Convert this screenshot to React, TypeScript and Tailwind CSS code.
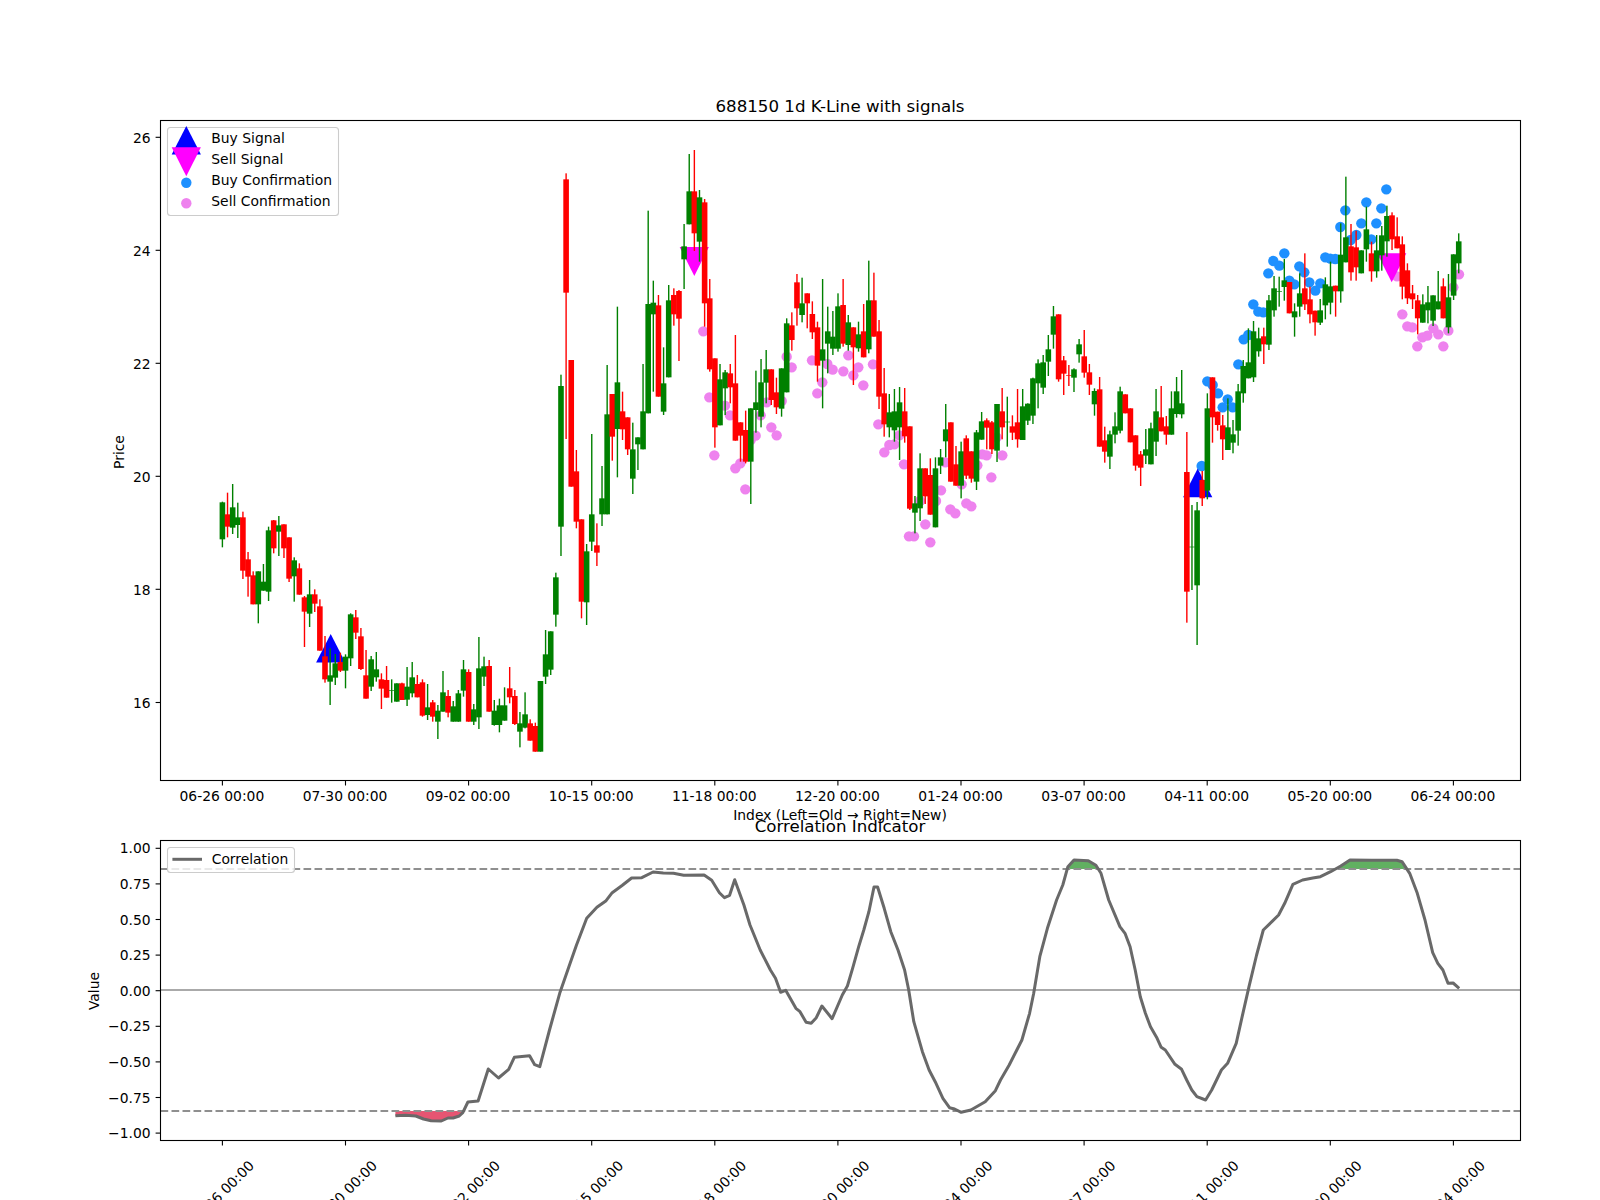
import React from 'react';

type Row = [string, number, number, number, number];
type Pt = [number, number];

// candle rows as read from the plot: colour, wick top, body top, body bottom, wick bottom
// each block has its own vertical offset, values are in 1/3 px
const blocks: { y0: number; rows: Row[] }[] = [
  {
    y0: 460,
    rows: [
      ['g', 125, 127, 238, 262], ['r', 98, 163, 200, 232], ['g', 72, 142, 203, 222], ['g', 128, 172, 195, 234],
      ['r', 155, 172, 332, 357], ['r', 276, 298, 350, 410], ['r', 334, 346, 433, 433], ['g', 334, 334, 433, 490],
      ['g', 312, 365, 392, 392], ['g', 200, 211, 395, 423], ['r', 180, 181, 265, 280], ['g', 168, 196, 215, 288],
      ['r', 193, 193, 265, 294], ['r', 232, 232, 356, 366], ['g', 292, 301, 349, 425], ['r', 310, 325, 404, 404],
      ['r', 408, 412, 455, 561], ['g', 360, 403, 461, 501], ['r', 388, 403, 431, 456], ['r', 418, 439, 572, 572],
      ['r', 528, 589, 658, 668], ['g', 565, 646, 665, 735], ['g', 582, 610, 653, 675], ['r', 578, 606, 632, 636],
      ['g', 583, 590, 632, 685], ['g', 460, 463, 595, 618], ['r', 450, 472, 518, 537], ['r', 504, 529, 627, 630],
      ['r', 570, 646, 716, 716], ['g', 588, 598, 680, 693], ['g', 576, 628, 652, 665], ['r', 640, 658, 686, 747],
      ['r', 618, 660, 713, 713], ['g', 658, 690, 692, 728], ['g', 670, 670, 725, 725], ['r', 668, 670, 720, 720],
      ['g', 621, 680, 719, 738], ['g', 606, 652, 700, 712], ['r', 645, 672, 712, 712], ['r', 658, 667, 767, 770],
      ['g', 672, 742, 765, 780], ['r', 720, 727, 770, 785], ['g', 735, 752, 785, 837], ['g', 633, 697, 755, 755],
      ['r', 690, 708, 758, 772], ['g', 723, 739, 785, 785], ['g', 690, 700, 785, 785], ['g', 600, 628, 692, 710],
      ['r', 628, 636, 785, 785], ['g', 732, 748, 785, 795], ['g', 531, 625, 772, 807], ['g', 590, 619, 650, 678],
      ['r', 600, 618, 755, 755], ['g', 720, 752, 795, 797], ['g', 716, 736, 795, 817], ['g', 682, 736, 782, 782],
      ['r', 621, 685, 712, 730], ['r', 690, 708, 792, 795], ['g', 756, 790, 815, 862], ['g', 697, 763, 803, 805],
      ['r', 778, 790, 842, 842], ['r', 788, 798, 875, 875], ['g', 663, 663, 875, 875], ['g', 510, 583, 650, 672],
      ['g', 514, 514, 629, 645],
    ],
  },
  { y0: 370, rows: [['g', 608, 622, 734, 770], ['g', 14, 48, 470, 558]] },
  { y0: 140, rows: [['r', 100, 118, 458, 897]] },
  {
    y0: 370,
    rows: [
      ['r', -30, -30, 350, 350], ['r', 240, 304, 455, 475], ['r', 448, 448, 695, 745], ['g', 522, 544, 697, 765],
      ['g', 192, 433, 515, 543], ['r', 460, 526, 548, 588], ['g', 288, 385, 433, 468], ['g', -15, 133, 433, 433],
      ['r', 72, 72, 200, 272], ['g', -190, 37, 177, 322], ['r', 65, 124, 178, 210], ['r', 142, 142, 238, 255],
      ['g', 158, 238, 326, 372], ['g', 202, 202, 223, 300], ['g', -18, 124, 238, 238],
    ],
  },
  {
    y0: 140,
    rows: [
      ['g', 212, 492, 820, 820], ['g', 422, 488, 523, 755], ['r', 465, 496, 770, 770], ['g', 622, 730, 815, 825],
      ['g', 435, 481, 712, 712], ['r', 445, 465, 523, 557], ['r', 450, 453, 536, 663], ['g', 252, 319, 358, 447],
      ['g', 42, 154, 253, 253], ['r', 30, 154, 280, 333], ['g', 150, 172, 305, 365], ['r', 177, 187, 490, 560],
      ['r', 417, 475, 688, 695], ['r', 655, 655, 862, 923], ['g', 672, 718, 856, 856], ['g', 690, 697, 745, 825],
      ['r', 672, 700, 742, 790], ['r', 585, 730, 902, 902], ['r', 847, 847, 887, 965], ['r', 812, 870, 965, 970],
      ['g', 805, 805, 965, 1092], ['g', 692, 787, 810, 878], ['g', 657, 727, 830, 862], ['g', 630, 688, 728, 790],
      ['r', 688, 688, 780, 795], ['r', 713, 757, 802, 822], ['g', 685, 685, 806, 830], ['g', 535, 550, 757, 757],
      ['r', 517, 556, 600, 632], ['r', 402, 427, 505, 557], ['g', 413, 490, 525, 547], ['r', 460, 460, 490, 565],
      ['r', 484, 522, 577, 597], ['r', 545, 562, 677, 725], ['g', 417, 628, 662, 805], ['g', 500, 574, 611, 700],
      ['g', 513, 590, 626, 645], ['g', 460, 499, 626, 635], ['r', 417, 495, 611, 620], ['g', 525, 547, 615, 632],
      ['r', 562, 562, 622, 735], ['g', 545, 583, 625, 635],
    ],
  },
  {
    y0: 240,
    rows: [
      ['r', 192, 274, 352, 352], ['g', 62, 181, 328, 340], ['r', 98, 181, 290, 290], ['r', 240, 274, 470, 507],
      ['r', 384, 460, 553, 590], ['g', 462, 517, 562, 592], ['g', 447, 514, 571, 605], ['g', 441, 487, 562, 660],
      ['r', 444, 514, 589, 608], ['r', 559, 559, 806, 810], ['g', 768, 790, 818, 880], ['g', 640, 685, 805, 843],
      ['r', 685, 685, 769, 792], ['r', 655, 705, 824, 824], ['g', 652, 685, 862, 862], ['g', 627, 652, 677, 702],
      ['g', 492, 568, 604, 652], ['r', 547, 547, 725, 725], ['r', 618, 673, 737, 737], ['g', 605, 634, 737, 775],
      ['r', 586, 595, 707, 717], ['r', 634, 634, 716, 728], ['g', 570, 577, 725, 750], ['g', 516, 544, 599, 599],
      ['r', 535, 541, 563, 628], ['r', 543, 547, 628, 642], ['g', 492, 492, 632, 666], ['r', 444, 514, 562, 598],
      ['g', 470, 545, 547, 620], ['r', 526, 559, 578, 600], ['r', 447, 547, 598, 623], ['g', 447, 499, 600, 600],
      ['g', 490, 491, 542, 555], ['g', 413, 415, 527, 552], ['g', 358, 370, 430, 505], ['g', 345, 367, 443, 462],
      ['g', 285, 328, 365, 408], ['g', 198, 229, 284, 326], ['r', 223, 223, 418, 425], ['r', 348, 361, 401, 465],
      ['r', 375, 405, 407, 438], ['g', 385, 388, 413, 456], ['g', 297, 313, 343, 368], ['r', 270, 349, 398, 413],
      ['r', 372, 397, 434, 465], ['g', 445, 453, 493, 527], ['r', 411, 448, 620, 620], ['r', 560, 601, 635, 668],
      ['g', 572, 583, 650, 687], ['g', 517, 559, 584, 610], ['g', 440, 454, 572, 580], ['r', 463, 463, 520, 520],
      ['r', 505, 505, 607, 607], ['r', 586, 586, 677, 692], ['r', 633, 643, 683, 738], ['g', 567, 628, 647, 672],
      ['g', 548, 565, 673, 673], ['g', 447, 514, 605, 648], ['r', 438, 532, 574, 574], ['r', 528, 559, 584, 614],
      ['g', 454, 505, 584, 584], ['g', 411, 454, 522, 533], ['g', 390, 490, 523, 535],
    ],
  },
  {
    y0: 400,
    rows: [
      ['r', 96, 216, 575, 668], ['g', 315, 440, 442, 570], ['g', 306, 331, 556, 735], ['r', 213, 240, 295, 318],
      ['g', -20, 25, 272, 298],
    ],
  },
  {
    y0: 160,
    rows: [
      ['r', 652, 652, 772, 848], ['r', 755, 755, 795, 812], ['r', 765, 796, 838, 900], ['g', 715, 802, 870, 870],
      ['g', 780, 823, 848, 880], ['g', 672, 694, 812, 857], ['g', 600, 618, 700, 728], ['g', 505, 607, 655, 655],
      ['g', 483, 514, 652, 666], ['g', 503, 535, 574, 590], ['r', 503, 529, 553, 612], ['g', 405, 421, 554, 570],
      ['g', 348, 385, 451, 470], ['g', 350, 394, 396, 440], ['g', 297, 361, 381, 422], ['r', 366, 366, 460, 460],
      ['g', 430, 454, 472, 530], ['g', 340, 400, 440, 470], ['r', 280, 385, 433, 450], ['r', 380, 418, 463, 490],
      ['r', 452, 452, 487, 527], ['g', 417, 451, 488, 495], ['g', 352, 373, 436, 478], ['g', 305, 379, 428, 463],
      ['r', 377, 377, 394, 470], ['g', 190, 284, 394, 428], ['g', 50, 232, 307, 307], ['r', 192, 259, 337, 362],
      ['r', 212, 262, 322, 362], ['g', 271, 271, 340, 340], ['g', 140, 208, 268, 305], ['r', 245, 280, 334, 365],
      ['g', 225, 271, 334, 353], ['g', 198, 226, 286, 332], ['g', 137, 168, 244, 290], ['r', 157, 166, 238, 270],
      ['r', 172, 229, 265, 265], ['r', 229, 253, 380, 418], ['r', 310, 331, 415, 432], ['r', 375, 400, 418, 447],
      ['r', 405, 421, 475, 523], ['g', 403, 433, 488, 488], ['g', 378, 427, 451, 490], ['g', 406, 406, 482, 498],
      ['g', 333, 424, 448, 448], ['r', 355, 379, 475, 475], ['g', 342, 412, 502, 520], ['g', 283, 283, 407, 420],
      ['g', 220, 244, 310, 340],
    ],
  },
];

const candles = blocks.flatMap((b) =>
  b.rows.map(([c, wt, t, bt, wb]) => ({
    color: c === 'g' ? '#008000' : '#ff0000',
    wickTop: b.y0 + wt / 3,
    top: b.y0 + t / 3,
    bottom: b.y0 + bt / 3,
    wickBottom: b.y0 + wb / 3,
  }))
);

const at = (x0: number, y0: number, pts: Pt[]): Pt[] => pts.map(([x, y]) => [x0 + x / 3, y0 + y / 3]);

const buyDots: Pt[] = at(1150, 160, [
  [155, 918], [172, 664], [188, 675], [204, 700], [218, 742], [233, 718], [248, 742], [265, 613], [281, 538],
  [295, 525], [310, 433], [325, 455], [340, 457], [355, 340], [370, 303], [388, 317], [403, 280], [418, 362],
  [433, 373], [448, 319], [463, 337], [478, 367], [496, 392], [511, 370], [526, 292], [541, 296], [556, 297],
  [571, 201], [586, 151], [602, 240], [619, 225], [634, 190], [649, 127], [664, 238], [679, 190], [694, 145],
  [709, 88],
]);

const sellDots: Pt[] = [
  ...at(540, 140, [[490, 574], [508, 772], [523, 946]]),
  ...at(720, 340, [
    [15, 197], [30, 226], [46, 385], [61, 370], [76, 448], [92, 300], [107, 287], [122, 226], [140, 187], [154, 262],
    [170, 286], [185, 183], [200, 50], [215, 82], [276, 61], [292, 160], [307, 127], [322, 72], [338, 89],
  ]),
  ...at(840, 240, [
    [10, 394], [25, 346], [40, 406], [55, 382], [70, 436], [99, 373], [115, 553], [133, 637], [148, 615], [163, 613],
    [178, 586], [192, 673], [207, 889], [222, 889], [240, 783], [256, 853], [271, 907], [288, 783], [303, 751],
    [316, 667], [331, 808], [346, 820], [365, 733], [379, 790], [394, 799], [412, 676], [427, 643], [440, 646],
    [454, 712], [470, 592], [487, 646],
  ]),
  ...at(1150, 160, [
    [741, 349], [757, 463], [772, 499], [787, 502], [802, 559], [817, 532], [832, 527], [850, 505], [865, 523],
    [880, 559], [895, 512], [910, 382], [927, 343],
  ]),
];

// correlation line, read off two crops (x * 1.96, y * 3)
const crop = (x0: number, pts: Pt[]): Pt[] => pts.map(([x, y]) => [x0 + x / 1.96, 770 + y / 3]);

const corrLine: Pt[] = [
  ...crop(0, [
    [775, 1037], [795, 1036], [815, 1038], [830, 1047], [845, 1052], [865, 1053], [878, 1044], [888, 1044], [900, 1038],
    [907, 1028], [917, 996], [937, 993], [957, 897], [977, 924], [997, 898], [1008, 862], [1038, 857], [1048, 884],
    [1058, 890], [1077, 780], [1097, 670], [1115, 590], [1130, 525], [1150, 445], [1170, 412], [1188, 392], [1200, 368],
    [1220, 346], [1238, 324], [1258, 323], [1280, 306], [1300, 309], [1320, 310], [1340, 316], [1380, 315], [1395, 331],
    [1410, 368], [1420, 383], [1430, 376], [1440, 329], [1458, 405], [1470, 465], [1490, 540], [1510, 600], [1520, 625],
    [1530, 667], [1540, 661], [1560, 715],
  ]),
  ...crop(800, [
    [0, 725], [12, 757], [22, 760], [32, 743], [43, 708], [63, 746], [83, 675], [93, 648], [103, 595], [115, 530],
    [125, 480], [135, 425], [145, 351], [152, 351], [165, 415], [178, 485], [192, 540], [205, 600], [213, 660], [223, 755],
    [240, 845], [253, 900], [265, 935], [280, 985], [293, 1013], [303, 1017], [316, 1027], [335, 1020], [363, 995],
    [383, 962], [393, 930], [410, 885], [435, 810], [450, 730], [458, 670], [470, 560], [485, 475], [503, 390], [515, 345],
    [525, 290], [537, 270], [565, 272], [580, 286], [590, 310], [605, 390], [627, 470], [637, 490], [647, 530], [657, 600],
    [667, 680], [677, 730], [687, 770], [700, 805], [708, 832], [716, 840], [735, 883], [748, 898], [758, 930], [768, 960],
    [778, 980], [795, 990], [807, 960], [826, 900], [838, 880], [855, 820], [868, 730], [880, 650], [895, 555], [908, 480],
    [925, 455], [938, 435], [950, 400], [966, 343], [985, 330], [1005, 324], [1020, 320], [1040, 305], [1060, 288],
    [1078, 270], [1120, 271], [1170, 271], [1180, 275], [1195, 310], [1210, 370], [1225, 450], [1240, 548], [1250, 580],
    [1260, 600], [1270, 640], [1280, 639], [1292, 655],
  ]),
];

const redFill = crop(0, [
  [775, 1023], [775, 1037], [795, 1036], [815, 1038], [830, 1047], [845, 1052], [865, 1053], [878, 1044], [888, 1044],
  [900, 1038], [907, 1028], [909, 1023],
]);
const greenFillA = crop(800, [[522, 297], [525, 290], [537, 270], [565, 272], [580, 286], [584, 297]]);
const greenFillB = crop(800, [[1050, 297], [1060, 288], [1078, 270], [1120, 271], [1170, 271], [1180, 275], [1190, 297]]);

const toPoints = (pts: Pt[]) => pts.map(([x, y]) => `${x.toFixed(1)},${y.toFixed(1)}`).join(' ');

const dateLabels = [
  '06-26 00:00', '07-30 00:00', '09-02 00:00', '10-15 00:00', '11-18 00:00', '12-20 00:00',
  '01-24 00:00', '03-07 00:00', '04-11 00:00', '05-20 00:00', '06-24 00:00',
];
const tickX = (k: number) => 222.4 + 123.1 * k;
const candleX = (i: number) => 222.4 + 5.13 * i;

const priceTicks = [
  { label: '26', y: 137.3 }, { label: '24', y: 250.3 }, { label: '22', y: 363.3 },
  { label: '20', y: 476.3 }, { label: '18', y: 589.3 }, { label: '16', y: 702.5 },
];
const corrTicks = ['1.00', '0.75', '0.50', '0.25', '0.00', '\u22120.25', '\u22120.50', '\u22120.75', '\u22121.00'];
const corrY = (k: number) => 848.3 + 35.6 * k;

const FONT = 13.89;

const UpTriangle = ({ cx, top }: { cx: number; top: number }) => (
  <polygon points={`${cx},${top} ${cx + 14.6},${top + 28.6} ${cx - 14.6},${top + 28.6}`} fill="#0000ff" />
);
const DownTriangle = ({ cx, top }: { cx: number; top: number }) => (
  <polygon points={`${cx - 14.6},${top} ${cx + 14.6},${top} ${cx},${top + 28.9}`} fill="#ff00ff" />
);

export default function App() {
  return (
    <div className="w-[1600px] h-[1200px] bg-white overflow-hidden">
      <svg width={1600} height={1200} viewBox="0 0 1600 1200" className="block font-['DejaVu_Sans',sans-serif]">
        {/* price chart */}
        {sellDots.map(([x, y], i) => (
          <circle key={i} cx={x} cy={y} r={5.2} fill="#ee82ee" />
        ))}
        {buyDots.map(([x, y], i) => (
          <circle key={i} cx={x} cy={y} r={5.2} fill="#1e90ff" />
        ))}
        <UpTriangle cx={330.7} top={634} />
        <UpTriangle cx={1197.7} top={468.6} />
        <DownTriangle cx={694.3} top={247} />
        <DownTriangle cx={1391.7} top={253.3} />

        {candles.map((c, i) => {
          const x = candleX(i);
          return (
            <g key={i} fill={c.color}>
              <rect x={x - 0.7} y={c.wickTop} width={1.4} height={c.wickBottom - c.wickTop} />
              <rect x={x - 2.8} y={c.top} width={5.6} height={c.bottom - c.top} />
            </g>
          );
        })}

        <rect x={160.5} y={120.5} width={1360} height={660} fill="none" stroke="#000" strokeWidth={1.1} />
        {priceTicks.map((t) => (
          <g key={t.label}>
            <line x1={155.6} x2={160.5} y1={t.y} y2={t.y} stroke="#000" strokeWidth={1.1} />
            <text x={150.6} y={t.y + 5.5} textAnchor="end" fontSize={FONT}>{t.label}</text>
          </g>
        ))}
        {dateLabels.map((d, k) => (
          <g key={d}>
            <line x1={tickX(k)} x2={tickX(k)} y1={780.5} y2={785.5} stroke="#000" strokeWidth={1.1} />
            <text x={tickX(k) - 0.5} y={800.6} textAnchor="middle" fontSize={FONT}>{d}</text>
          </g>
        ))}
        <text x={840} y={820} textAnchor="middle" fontSize={FONT}>Index (Left=Old → Right=New)</text>
        <text x={840} y={112} textAnchor="middle" fontSize={16.67}>688150 1d K-Line with signals</text>
        <text x={124} y={452} textAnchor="middle" fontSize={FONT} transform="rotate(-90 124 452)">Price</text>

        {/* legend */}
        <rect x={167.5} y={127.5} width={171} height={88} rx={3} fill="#fff" fillOpacity={0.8} stroke="#ccc" strokeWidth={1.1} />
        <UpTriangle cx={186.3} top={126} />
        <DownTriangle cx={186.3} top={147.3} />
        <circle cx={186.3} cy={182.7} r={5.2} fill="#1e90ff" />
        <circle cx={186.3} cy={203.3} r={5.2} fill="#ee82ee" />
        <text x={211.3} y={143.3} fontSize={FONT}>Buy Signal</text>
        <text x={211.3} y={164.3} fontSize={FONT}>Sell Signal</text>
        <text x={211.3} y={185.3} fontSize={FONT}>Buy Confirmation</text>
        <text x={211.3} y={206.3} fontSize={FONT}>Sell Confirmation</text>

        {/* correlation chart */}
        <polygon points={toPoints(redFill)} fill="#dc143c" fillOpacity={0.72} />
        <polygon points={toPoints(greenFillA)} fill="#008000" fillOpacity={0.62} />
        <polygon points={toPoints(greenFillB)} fill="#008000" fillOpacity={0.62} />
        <line x1={160.5} x2={1520.5} y1={869} y2={869} stroke="#8f8f8f" strokeWidth={2.08} strokeDasharray="7.7 3.3" />
        <line x1={160.5} x2={1520.5} y1={1111} y2={1111} stroke="#8f8f8f" strokeWidth={2.08} strokeDasharray="7.7 3.3" />
        <line x1={160.5} x2={1520.5} y1={990} y2={990} stroke="#aaaaaa" strokeWidth={2.08} />
        <polyline points={toPoints(corrLine)} fill="none" stroke="#696969" strokeWidth={3} strokeLinejoin="round" />

        <rect x={160.5} y={840.5} width={1360} height={300} fill="none" stroke="#000" strokeWidth={1.1} />
        {corrTicks.map((t, k) => (
          <g key={t}>
            <line x1={155.6} x2={160.5} y1={corrY(k)} y2={corrY(k)} stroke="#000" strokeWidth={1.1} />
            <text x={150.6} y={corrY(k) + 5} textAnchor="end" fontSize={FONT}>{t}</text>
          </g>
        ))}
        {dateLabels.map((d, k) => {
          const cx = tickX(k) - 1;
          return (
            <g key={d}>
              <line x1={tickX(k)} x2={tickX(k)} y1={1140.5} y2={1145.5} stroke="#000" strokeWidth={1.1} />
              <text x={cx} y={1198} textAnchor="middle" fontSize={FONT} transform={`rotate(-45 ${cx} 1193)`}>{d}</text>
            </g>
          );
        })}
        <text x={840} y={832} textAnchor="middle" fontSize={16.67}>Correlation Indicator</text>
        <text x={99} y={991} textAnchor="middle" fontSize={FONT} transform="rotate(-90 99 991)">Value</text>

        <rect x={167.5} y={847.5} width={127} height={25} rx={3} fill="#fff" fillOpacity={0.8} stroke="#ccc" strokeWidth={1.1} />
        <line x1={172.4} x2={202} y1={859.3} y2={859.3} stroke="#696969" strokeWidth={3} />
        <text x={211.7} y={864.3} fontSize={FONT}>Correlation</text>
      </svg>
    </div>
  );
}
